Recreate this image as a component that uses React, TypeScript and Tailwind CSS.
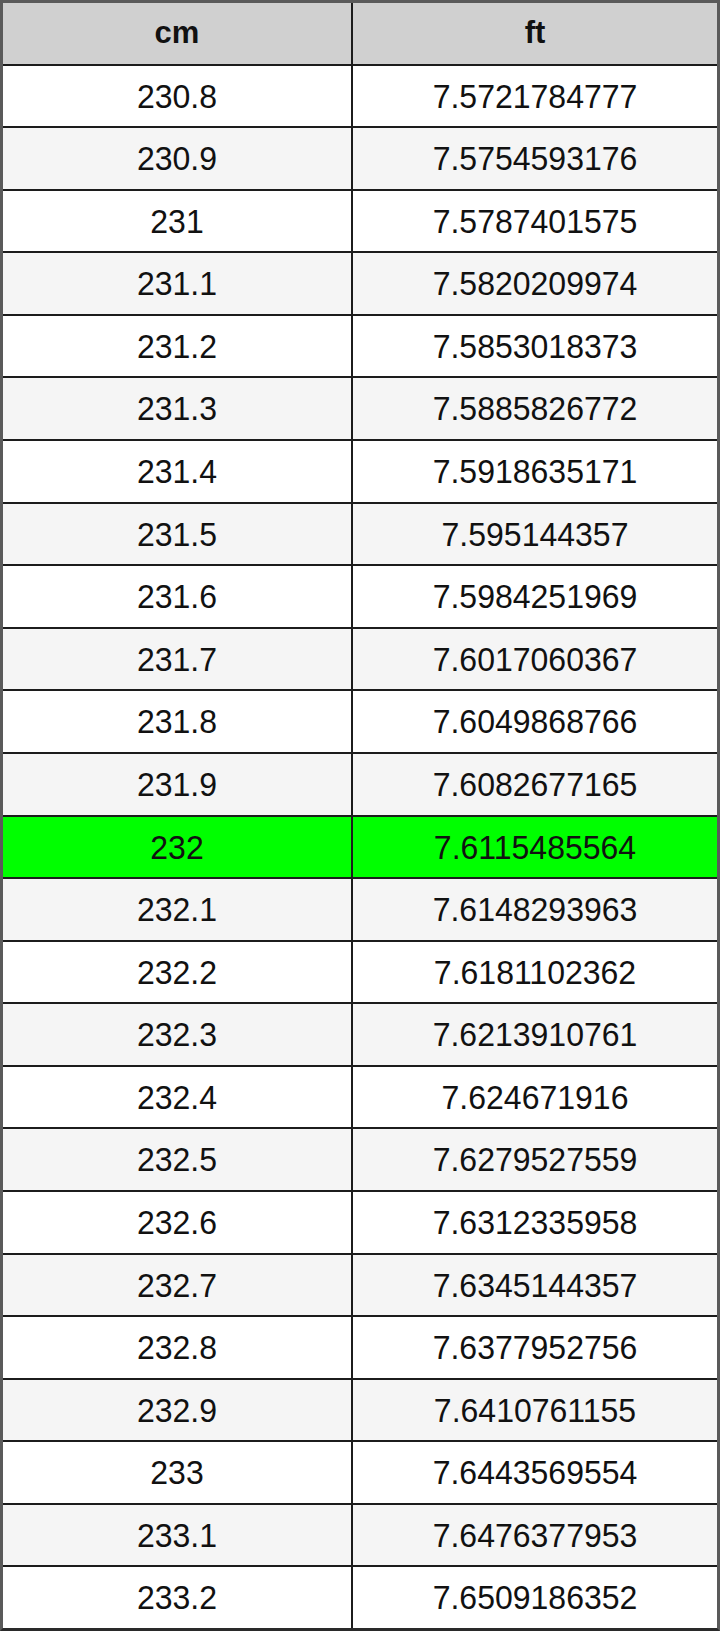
const rows: [string, string][] = [
  ["230.8", "7.5721784777"],
  ["230.9", "7.5754593176"],
  ["231", "7.5787401575"],
  ["231.1", "7.5820209974"],
  ["231.2", "7.5853018373"],
  ["231.3", "7.5885826772"],
  ["231.4", "7.5918635171"],
  ["231.5", "7.595144357"],
  ["231.6", "7.5984251969"],
  ["231.7", "7.6017060367"],
  ["231.8", "7.6049868766"],
  ["231.9", "7.6082677165"],
  ["232", "7.6115485564"],
  ["232.1", "7.6148293963"],
  ["232.2", "7.6181102362"],
  ["232.3", "7.6213910761"],
  ["232.4", "7.624671916"],
  ["232.5", "7.6279527559"],
  ["232.6", "7.6312335958"],
  ["232.7", "7.6345144357"],
  ["232.8", "7.6377952756"],
  ["232.9", "7.6410761155"],
  ["233", "7.6443569554"],
  ["233.1", "7.6476377953"],
  ["233.2", "7.6509186352"],
];

const App = () => {
  return (
    <div className="w-[720px] h-[1636px] bg-white font-['Liberation_Sans',Arial,sans-serif] text-[#111]">
      <div className="flex flex-col h-[1631px] border-[3px] border-[#5a5a5a] border-b-[#2a2a2a]">
        {/* header */}
        <div className="flex-1 grid grid-cols-[348px_2px_1fr] bg-[#d0d0d0] border-b-2 border-[#1c1c1c]">
          <div className="flex items-center justify-center text-[31px] font-bold">cm</div>
          <div className="bg-[#1c1c1c]" />
          <div className="flex items-center justify-center text-[31px] font-bold">ft</div>
        </div>
        {rows.map(([cm, ft], i) => {
          const highlight = cm === "232";
          const bg = highlight ? "bg-[#00ff00]" : i % 2 === 1 ? "bg-[#f5f5f5]" : "bg-white";
          const last = i === rows.length - 1;
          return (
            <div
              key={cm}
              className={`flex-1 grid grid-cols-[348px_2px_1fr] ${bg} ${last ? "" : "border-b-2 border-[#1c1c1c]"}`}
            >
              <div className="flex items-center justify-center text-[32px] scale-y-105">{cm}</div>
              <div className="bg-[#1c1c1c]" />
              <div className="flex items-center justify-center text-[32px] scale-y-105">{ft}</div>
            </div>
          );
        })}
      </div>
    </div>
  );
};

export default App;
